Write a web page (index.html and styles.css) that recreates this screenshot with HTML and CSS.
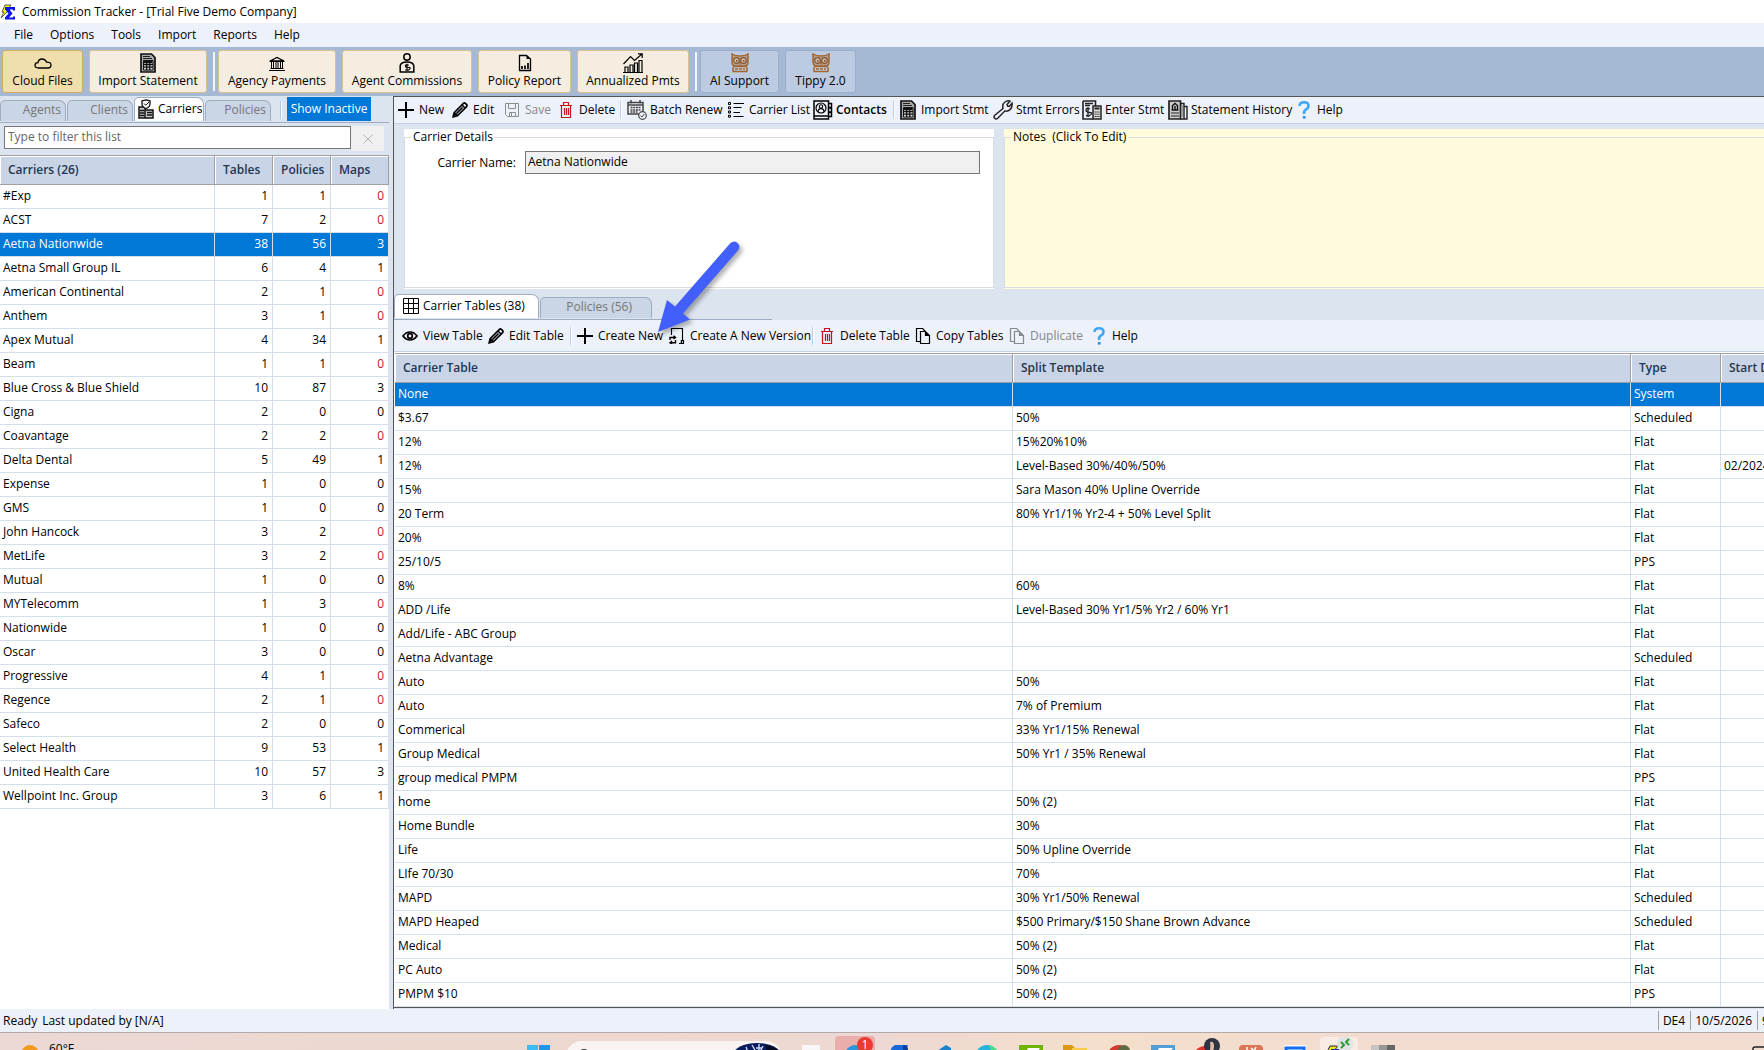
FILE: index.html
```html
<!DOCTYPE html>
<html lang="en">
<head>
<meta charset="utf-8">
<title>Commission Tracker - [Trial Five Demo Company]</title>
<link rel="stylesheet" href="styles.css">
</head>
<body>
<svg class="defs" aria-hidden="true">
  <symbol id="i-plus" viewBox="0 0 16 16"><path d="M8 0v16M0 8h16" stroke="#000" stroke-width="2"/></symbol>
  <symbol id="i-pencil" viewBox="0 0 16 16"><path d="M1.200 14.800l1-4.200L11.400 1.400q1-.8 2 0l1.200 1.200q.8 1 0 2L5.400 13.800zM10 3l3 3M2.400 10.800l2.800 2.800M4.500 11.500l6-6" fill="none" stroke="#000" stroke-width="1.700"/><path d="M1 15l.8-3 2.200 2.200z"/></symbol>
  <symbol id="i-save" viewBox="0 0 16 16"><path d="M1.500 1.500h13v13h-11l-2-2zM4.500 1.500v5h7v-5M5.500 14.500v-4h6v4M7.500 11v3" fill="none" stroke="#8a8d92"/></symbol>
  <symbol id="i-trash" viewBox="0 0 16 18"><path d="M2 4.500h12M5.500 4V1.500h5V4M3.500 5v11.500h9V5M6.500 7v7M8.500 7v7M10.500 7v7" fill="none" stroke="#c4171d" stroke-width="1.200"/></symbol>
  <symbol id="i-batch" viewBox="0 0 20 20"><path d="M1 2.500h15v11.500H1zM1 5h15M4 0v3.500M13 0v3.500" fill="none" stroke="#444" stroke-width="1.500"/><path d="M3.500 7.500h10M3.500 10h10M3.500 12h7" stroke="#444" stroke-width="1.500" stroke-dasharray="2 .7"/><circle cx="15.500" cy="15.500" r="3.800" fill="#edf1f9" stroke="#444" stroke-width="1.200"/><path d="M13.500 15.500l1.500 1.500 2.500-3" fill="none" stroke="#444"/></symbol>
  <symbol id="i-list" viewBox="0 0 16 16"><path d="M.5.5h2v2h-2zM.5 4.800h2v2h-2zM.5 9h2v2h-2zM.5 13.200h2v2h-2z" fill="none" stroke="#000"/><path d="M5.500 1.500H16M5.500 5.500h8M5.500 10.500H12M5.500 14.500h10" stroke="#000" stroke-width="1.200"/></symbol>
  <symbol id="i-contacts" viewBox="0 0 20 20"><path d="M1 1h14.500v18H1zM1 16h14M15.500 3.500H18.500v4h-3M15.500 8h3v4h-3M15.500 12.500h3v4h-3" fill="none" stroke="#000" stroke-width="1.500"/><circle cx="8" cy="8" r="5" fill="none" stroke="#000" stroke-width="1.200"/><circle cx="8" cy="6.500" r="1.700" fill="none" stroke="#000" stroke-width="1.100"/><path d="M5 12q0-3.400 3-3.400t3 3.400" fill="none" stroke="#000" stroke-width="1.100"/></symbol>
  <symbol id="i-calc" viewBox="0 0 16 20"><path d="M1 1h10.500L15 4.500V19H1z" fill="#aaa" stroke="#111" stroke-width="1.700"/><path d="M3 3.500h7M3 5.500h9" stroke="#222"/><path d="M3.500 7.500h9.500v9.500H3.500z" fill="#ddd" stroke="#111"/><path d="M4 9h8.500" stroke="#111" stroke-width="2"/><path d="M6.700 9v8M9.800 9v8M4 11.500h9M4 14.200h9" stroke="#111" stroke-width="1.300"/></symbol>
  <symbol id="i-wrench" viewBox="0 0 20 20"><path d="M1.500 15.500L10 8.500Q9 4 12 2t5-.8L14 4.500l.6 1.600 1.700.4L19 3.200q.7 4-2 6.400t-5 1.200L4.500 18.500q-1.500 1-2.800-.3t-.2-2.700z" fill="none" stroke="#222" stroke-width="1.500"/></symbol>
  <symbol id="i-enter" viewBox="0 0 20 20"><path d="M1 1h12.500v5M1 1v18h10" fill="none" stroke="#222" stroke-width="1.600"/><path d="M3 3.500h8M3 5.500h5M6 7v10M8 9Q4 7.500 4 10t4 2.500-1 3.500l-3-.5" fill="none" stroke="#222" stroke-width="1.300"/><path d="M11 6h8v13h-8z" fill="#ddd" stroke="#222" stroke-width="1.500"/><path d="M12.500 8.500h5" stroke="#222" stroke-width="2"/><path d="M12.500 12h5M12.500 14.200h5M12.500 16.500h5" stroke="#222" stroke-dasharray="1.300 .6"/></symbol>
  <symbol id="i-history" viewBox="0 0 20 20"><path d="M1 1h11.500v18H1z" fill="#ccc" stroke="#222" stroke-width="1.700"/><path d="M4 6l3-2.500L10 6M4.500 6v4h5V6M7 6v4M3.500 10h7" fill="none" stroke="#111" stroke-width="1.400"/><path d="M3 13h8M3 16h8" stroke="#222" stroke-width="1.200"/><path d="M12.500 3.500H16V19h-3.500M16 6.500h3V19h-3" fill="none" stroke="#222" stroke-width="1.400"/><path d="M14.200 5v12" stroke="#777"/></symbol>
  <symbol id="i-help" viewBox="0 0 16 18"><path d="M3.500 5Q3.500 1.300 8 1.300t4.500 3.700Q12.500 7 10 8.500T8.200 13" fill="none" stroke="#3ea6f8" stroke-width="2.600"/><path d="M6.800 15h2.800v2.600H6.800z" fill="#2f8fea"/></symbol>
  <symbol id="i-grid" viewBox="0 0 16 16"><path d="M.5.5h15v15H.5zM.5 5.500h15M.5 10.500h15M5.500.5v15M10.500.5v15" fill="none" stroke="#000"/></symbol>
  <symbol id="i-eye" viewBox="0 0 16 16"><path d="M1 8q3-4 7-4t7 4q-3 4-7 4T1 8z" fill="none" stroke="#000" stroke-width="1.700"/><circle cx="8" cy="8" r="2.300" fill="none" stroke="#000" stroke-width="1.700"/></symbol>
  <symbol id="i-version" viewBox="0 0 16 16"><path d="M2.500 7V.5h11V13M10 15.500h4.500V12" fill="none" stroke="#000" stroke-width="1.100"/><path d="M1 12V9.500h5M4.500 7.800L6.500 9.500 4.500 11M6.500 12v2.800h-5M3 13l-2 1.800L3 16M12.500 12v3" fill="none" stroke="#000" stroke-width="1.400"/></symbol>
  <symbol id="i-copy" viewBox="0 0 16 16"><path d="M5 13.500H1.500V.5h6L10 3" fill="none" stroke="currentColor" stroke-width="1.200"/><path d="M5.500 3.500h5L14.500 7.500v8h-9zM10.500 3.500v4h4" fill="none" stroke="currentColor" stroke-width="1.200"/><path d="M10.500 3.500l4 4h-4z" fill="currentColor"/></symbol>
  <symbol id="i-cloud" viewBox="0 0 18 20"><path d="M4.500 15Q1 15 1 12.300T4 9.600Q4.600 6 8 6t4.500 3.200q4.500-.2 4.500 2.900T13.500 15z" fill="none" stroke="#000" stroke-width="1.300"/></symbol>
  <symbol id="i-bank" viewBox="0 0 18 20"><path d="M2 8L9 4.500 16 8z" fill="none" stroke="#000" stroke-width="1.300"/><path d="M1.500 8.500h15M2.500 15.500h13M1 17.500h16" stroke="#000"/><path d="M3.500 9v6M5.500 9v6M8 9v6M10 9v6M12.500 9v6M14.500 9v6" stroke="#000"/></symbol>
  <symbol id="i-agent" viewBox="0 0 16 20"><circle cx="8" cy="4" r="3.200" fill="none" stroke="#000" stroke-width="1.500"/><path d="M1.200 19v-6.500Q2 9 8 9t6.800 3.500V19z" fill="none" stroke="#000" stroke-width="1.500"/><path d="M9.800 12.200Q6.400 11.200 6.400 12.900t3.200 1.600-.1 2.700l-3.200-.3M8 10.800v7.500" fill="none" stroke="#000" stroke-width="1.100"/></symbol>
  <symbol id="i-report" viewBox="0 0 14 20"><path d="M1.500 2.500h7L12.500 6v11.500h-11z" fill="none" stroke="#000" stroke-width="1.300"/><path d="M8.500 2.500V6h4z"/><path d="M4 16v-3M7 16v-3.500M10 16v-6" stroke="#000" stroke-width="1.700"/></symbol>
  <symbol id="i-chart" viewBox="0 0 20 20"><path d="M0 19.500h20M2 19v-5h3v5M7 19v-7h3v7M11.500 19V10h3v9M16 19V7.500h3V19" fill="none" stroke="#000" stroke-width="1.200"/><path d="M.5 11l7-7.500 4 4L19 1M15 .8h4.200V5" fill="none" stroke="#000" stroke-width="1.200"/></symbol>
  <symbol id="i-owl" viewBox="0 0 18 20"><path d="M1 1q3 2 8 2t8-2v8q0 3-2 4H3q-2-1-2-4z" fill="#a56c3c" fill-opacity=".45" stroke="#a3652f" stroke-width="1.500"/><circle cx="5.500" cy="7.500" r="2.800" fill="#c9bdb3" stroke="#8c5423" stroke-width="1.200"/><circle cx="12.500" cy="7.500" r="2.800" fill="#c9bdb3" stroke="#8c5423" stroke-width="1.200"/><path d="M5 7h1.500v1.500H5zM12 7h1.500v1.500H12zM8.200 9.500h1.600L9 12z" fill="#7a4518"/><path d="M2.500 13.500h13M1.500 18.500h15M2 14v4.500M16 14v4.500M4 16h3M8 16h3M12 16h2" stroke="#a3652f" stroke-width="1.500"/></symbol>
  <symbol id="i-carriers" viewBox="0 0 16 20"><path d="M1 8h6v11H1zM7 11h8v8H7z" fill="#ccc" stroke="#111" stroke-width="1.500"/><path d="M4 1.800L8 .8l4 1V5q0 3-4 4.500Q4 8 4 5z" fill="#fff" stroke="#111" stroke-width="1.300"/><path d="M6 4.500l1.800 1.800L11 3" fill="none" stroke="#111"/><path d="M2 11.500h4M2 14h4M2 16.500h4M9 13.500h5M9 16h5" stroke="#111" stroke-width="1.500"/></symbol>
</svg>

<header class="titlebar">
  <svg class="applogo" width="16" height="16" viewBox="0 0 16 16"><path d="M5 1h6L8 5h2L1 14l3-6H2z" fill="#ff0" stroke="#333" stroke-width=".8"/><path d="M5 3h10v3.500h-2V5.500H9.500l3 4-3.500 4h4V12.500h2V15.500H5v-2l3.500-4L5 5.500z" fill="#0a14f0"/></svg>
  <h1 class="apptitle">Commission Tracker - [Trial Five Demo Company]</h1>
</header>

<nav class="menubar">
  <button type="button">File</button><button type="button">Options</button><button type="button">Tools</button><button type="button">Import</button><button type="button">Reports</button><button type="button">Help</button>
</nav>

<div class="mainbar">
  <button type="button" class="big big-active"><svg width="18" height="20"><use href="#i-cloud"/></svg>Cloud Files</button>
  <button type="button" class="big big-long"><svg width="16" height="20"><use href="#i-calc"/></svg>Import Statement</button>
  <span class="bar-sep"></span>
  <button type="button" class="big big-long"><svg width="18" height="20"><use href="#i-bank"/></svg>Agency Payments</button>
  <button type="button" class="big big-xlong"><svg width="16" height="20"><use href="#i-agent"/></svg>Agent Commissions</button>
  <button type="button" class="big big-mid"><svg width="14" height="20"><use href="#i-report"/></svg>Policy Report</button>
  <button type="button" class="big big-wide"><svg width="20" height="20"><use href="#i-chart"/></svg>Annualized Pmts</button>
  <span class="bar-sep"></span>
  <button type="button" class="big big-blue"><svg width="18" height="20"><use href="#i-owl"/></svg>AI Support</button>
  <button type="button" class="big big-blue big-short"><svg width="18" height="20"><use href="#i-owl"/></svg>Tippy 2.0</button>
</div>

<main class="work">
  <aside class="side">
    <div class="tabs side-tabs">
      <button type="button" class="tab">Agents</button>
      <button type="button" class="tab">Clients</button>
      <button type="button" class="tab tab-on"><svg width="16" height="20"><use href="#i-carriers"/></svg>Carriers</button>
      <button type="button" class="tab">Policies</button>
      <span class="sep"></span>
      <button type="button" class="show-inactive">Show Inactive</button>
    </div>
    <div class="filter">
      <input type="text" aria-label="Filter" placeholder="Type to filter this list">
      <button type="button" aria-label="Clear filter"><svg width="10" height="10" viewBox="0 0 10 10"><path d="M.5.5l9 9M9.500.5l-9 9" stroke="#b4b4b4"/></svg></button>
    </div>
    <table class="grid carriers">
      <colgroup><col><col class="c-num"><col class="c-num"><col class="c-num"></colgroup>
      <thead><tr><th>Carriers (26)</th><th>Tables</th><th>Policies</th><th>Maps</th></tr></thead>
      <tbody>
        <tr><td>#Exp</td><td>1</td><td>1</td><td class="red">0</td></tr>
        <tr><td>ACST</td><td>7</td><td>2</td><td class="red">0</td></tr>
        <tr class="sel"><td>Aetna Nationwide</td><td>38</td><td>56</td><td>3</td></tr>
        <tr><td>Aetna Small Group IL</td><td>6</td><td>4</td><td>1</td></tr>
        <tr><td>American Continental</td><td>2</td><td>1</td><td class="red">0</td></tr>
        <tr><td>Anthem</td><td>3</td><td>1</td><td class="red">0</td></tr>
        <tr><td>Apex Mutual</td><td>4</td><td>34</td><td>1</td></tr>
        <tr><td>Beam</td><td>1</td><td>1</td><td class="red">0</td></tr>
        <tr><td>Blue Cross &amp; Blue Shield</td><td>10</td><td>87</td><td>3</td></tr>
        <tr><td>Cigna</td><td>2</td><td>0</td><td>0</td></tr>
        <tr><td>Coavantage</td><td>2</td><td>2</td><td class="red">0</td></tr>
        <tr><td>Delta Dental</td><td>5</td><td>49</td><td>1</td></tr>
        <tr><td>Expense</td><td>1</td><td>0</td><td>0</td></tr>
        <tr><td>GMS</td><td>1</td><td>0</td><td>0</td></tr>
        <tr><td>John Hancock</td><td>3</td><td>2</td><td class="red">0</td></tr>
        <tr><td>MetLife</td><td>3</td><td>2</td><td class="red">0</td></tr>
        <tr><td>Mutual</td><td>1</td><td>0</td><td>0</td></tr>
        <tr><td>MYTelecomm</td><td>1</td><td>3</td><td class="red">0</td></tr>
        <tr><td>Nationwide</td><td>1</td><td>0</td><td>0</td></tr>
        <tr><td>Oscar</td><td>3</td><td>0</td><td>0</td></tr>
        <tr><td>Progressive</td><td>4</td><td>1</td><td class="red">0</td></tr>
        <tr><td>Regence</td><td>2</td><td>1</td><td class="red">0</td></tr>
        <tr><td>Safeco</td><td>2</td><td>0</td><td>0</td></tr>
        <tr><td>Select Health</td><td>9</td><td>53</td><td>1</td></tr>
        <tr><td>United Health Care</td><td>10</td><td>57</td><td>3</td></tr>
        <tr><td>Wellpoint Inc. Group</td><td>3</td><td>6</td><td>1</td></tr>
      </tbody>
    </table>
  </aside>

  <section class="content">
    <div class="tools carrier-tools">
      <button type="button"><svg width="16" height="16"><use href="#i-plus"/></svg>New</button>
      <button type="button"><svg width="16" height="16"><use href="#i-pencil"/></svg>Edit</button>
      <button type="button" class="off" disabled><svg width="16" height="16"><use href="#i-save"/></svg>Save</button>
      <button type="button"><svg width="16" height="18"><use href="#i-trash"/></svg>Delete</button>
      <span class="sep"></span>
      <button type="button" class="wide"><svg width="20" height="20"><use href="#i-batch"/></svg>Batch Renew</button>
      <button type="button"><svg width="16" height="16"><use href="#i-list"/></svg>Carrier List</button>
      <button type="button" class="wide strong"><svg width="20" height="20"><use href="#i-contacts"/></svg>Contacts</button>
      <span class="sep"></span>
      <button type="button"><svg width="16" height="20"><use href="#i-calc"/></svg>Import Stmt</button>
      <button type="button" class="wide"><svg width="20" height="20"><use href="#i-wrench"/></svg>Stmt Errors</button>
      <button type="button" class="wide"><svg width="20" height="20"><use href="#i-enter"/></svg>Enter Stmt</button>
      <button type="button" class="wide"><svg width="20" height="20"><use href="#i-history"/></svg>Statement History</button>
      <button type="button"><svg width="16" height="18"><use href="#i-help"/></svg>Help</button>
    </div>

    <div class="panels">
      <div class="panel">
        <fieldset>
          <legend>Carrier Details</legend>
          <div class="field"><label for="cname">Carrier Name:</label><input id="cname" type="text" value="Aetna Nationwide" readonly></div>
        </fieldset>
      </div>
      <div class="panel notes">
        <fieldset><legend>Notes&nbsp; (Click To Edit)</legend></fieldset>
      </div>
    </div>

    <div class="tabs table-tabs">
      <button type="button" class="tab tab-on"><svg width="16" height="16"><use href="#i-grid"/></svg>Carrier Tables (38)</button>
      <button type="button" class="tab">Policies (56)</button>
    </div>

    <div class="tools table-tools">
      <button type="button"><svg width="16" height="16"><use href="#i-eye"/></svg>View Table</button>
      <button type="button"><svg width="16" height="16"><use href="#i-pencil"/></svg>Edit Table</button>
      <span class="sep"></span>
      <button type="button"><svg width="16" height="16"><use href="#i-plus"/></svg>Create New</button>
      <button type="button"><svg width="16" height="16"><use href="#i-version"/></svg>Create A New Version</button>
      <span class="sep"></span>
      <button type="button"><svg width="16" height="18"><use href="#i-trash"/></svg>Delete Table</button>
      <button type="button"><svg width="16" height="16"><use href="#i-copy"/></svg>Copy Tables</button>
      <button type="button" class="off" disabled><svg width="16" height="16"><use href="#i-copy"/></svg>Duplicate</button>
      <button type="button"><svg width="16" height="18"><use href="#i-help"/></svg>Help</button>
    </div>

    <div class="table-wrap">
      <table class="grid schedule">
        <colgroup><col><col><col class="c-type"><col class="c-date"></colgroup>
        <thead><tr><th>Carrier Table</th><th>Split Template</th><th>Type</th><th>Start Date</th></tr></thead>
        <tbody>
          <tr class="sel"><td>None</td><td></td><td>System</td><td></td></tr>
          <tr><td>$3.67</td><td>50%</td><td>Scheduled</td><td></td></tr>
          <tr><td>12%</td><td>15%20%10%</td><td>Flat</td><td></td></tr>
          <tr><td>12%</td><td>Level-Based 30%/40%/50%</td><td>Flat</td><td>02/2024</td></tr>
          <tr><td>15%</td><td>Sara Mason 40% Upline Override</td><td>Flat</td><td></td></tr>
          <tr><td>20 Term</td><td>80% Yr1/1% Yr2-4 + 50% Level Split</td><td>Flat</td><td></td></tr>
          <tr><td>20%</td><td></td><td>Flat</td><td></td></tr>
          <tr><td>25/10/5</td><td></td><td>PPS</td><td></td></tr>
          <tr><td>8%</td><td>60%</td><td>Flat</td><td></td></tr>
          <tr><td>ADD /Life</td><td>Level-Based 30% Yr1/5% Yr2 / 60% Yr1</td><td>Flat</td><td></td></tr>
          <tr><td>Add/Life - ABC Group</td><td></td><td>Flat</td><td></td></tr>
          <tr><td>Aetna Advantage</td><td></td><td>Scheduled</td><td></td></tr>
          <tr><td>Auto</td><td>50%</td><td>Flat</td><td></td></tr>
          <tr><td>Auto</td><td>7% of Premium</td><td>Flat</td><td></td></tr>
          <tr><td>Commerical</td><td>33% Yr1/15% Renewal</td><td>Flat</td><td></td></tr>
          <tr><td>Group Medical</td><td>50% Yr1 / 35% Renewal</td><td>Flat</td><td></td></tr>
          <tr><td>group medical PMPM</td><td></td><td>PPS</td><td></td></tr>
          <tr><td>home</td><td>50% (2)</td><td>Flat</td><td></td></tr>
          <tr><td>Home Bundle</td><td>30%</td><td>Flat</td><td></td></tr>
          <tr><td>Life</td><td>50% Upline Override</td><td>Flat</td><td></td></tr>
          <tr><td>LIfe 70/30</td><td>70%</td><td>Flat</td><td></td></tr>
          <tr><td>MAPD</td><td>30% Yr1/50% Renewal</td><td>Scheduled</td><td></td></tr>
          <tr><td>MAPD Heaped</td><td>$500 Primary/$150 Shane Brown Advance</td><td>Scheduled</td><td></td></tr>
          <tr><td>Medical</td><td>50% (2)</td><td>Flat</td><td></td></tr>
          <tr><td>PC Auto</td><td>50% (2)</td><td>Flat</td><td></td></tr>
          <tr><td>PMPM $10</td><td>50% (2)</td><td>PPS</td><td></td></tr>
        </tbody>
      </table>
    </div>

    <svg class="pointer" width="90" height="100" viewBox="0 0 90 100" aria-hidden="true"><path d="M4 92L13 60l8 6.500L76 3.500q4-3.500 7.500-.5t.5 7.500L29 73.500l7 6z" fill="#435ffb"/></svg>
  </section>
</main>

<footer class="status">
  <span>Ready</span><span class="grow">Last updated by [N/A]</span>
  <span class="cell">DE4</span><span class="cell">10/5/2026</span><span class="cell cell-time">9:41 AM</span>
</footer>

<div class="taskbar">
  <div class="weather"><svg width="18" height="18" viewBox="0 0 18 18"><circle cx="9" cy="9" r="9" fill="#f09a1c"/></svg><span>60°F</span></div>
  <div class="dock">
    <div class="slot low"><svg width="24" height="24" viewBox="0 0 24 24"><path d="M0 0h11v11H0z" fill="#3cbcf6"/><path d="M12 0h11v11H12z" fill="#2196e8"/></svg></div>
    <div class="search"><svg width="12" height="12" viewBox="0 0 12 12"><circle cx="6" cy="6" r="5" fill="none" stroke="#333" stroke-width="2"/></svg><svg width="50" height="24" viewBox="0 0 50 24"><ellipse cx="25" cy="12" rx="24" ry="12" fill="#0b1c5c"/><path d="M20 2l3 5M27 1v8M31 3l-2 4M14 4l2 5M24 5h6" stroke="#cfd6ee" stroke-width="1.400"/><path d="M33 2q12 2 16 8H36z" fill="#070b22"/></svg></div>
    <div class="slot low"><svg width="18" height="18" viewBox="0 0 18 18"><path d="M0 0h18v18H0z" fill="#f8f6f6"/></svg></div>
    <div class="slot alert"><svg width="20" height="20" viewBox="0 0 20 20"><circle cx="10" cy="10" r="10" fill="#2796dc"/></svg><span class="badge">1</span></div>
    <div class="slot low"><svg width="18" height="18" viewBox="0 0 18 18"><path d="M5 0h13l-3 9H0q0-7 5-9z" fill="#1767dd"/><path d="M13 0q5 0 5 5h-5z" fill="#0b3d9e"/></svg></div>
    <div class="slot low"><svg width="18" height="18" viewBox="0 0 18 18"><path d="M0 8L12 0l5 3v12z" fill="#1783d0"/></svg></div>
    <div class="slot low"><svg width="24" height="24" viewBox="0 0 24 24"><circle cx="12" cy="12" r="12" fill="#25b4dc"/><path d="M14 0q10 3 10 12h-6z" fill="#4ade80"/></svg></div>
    <div class="slot low"><svg width="24" height="24" viewBox="0 0 24 24"><path d="M0 0h24v24H0z" fill="#6fb404"/><path d="M9 3h12l-4 6H6z" fill="#fff"/></svg></div>
    <div class="slot low"><svg width="24" height="24" viewBox="0 0 24 24"><path d="M0 0h9l3 3h12v18H0z" fill="#dc9a12"/><path d="M9 3h15v3H9z" fill="#f8cc48"/></svg></div>
    <div class="slot low"><svg width="24" height="24" viewBox="0 0 24 24"><circle cx="12" cy="12" r="12" fill="#d33b30"/><circle cx="17" cy="6" r="6" fill="#5d6a42"/></svg></div>
    <div class="slot low"><svg width="24" height="24" viewBox="0 0 24 24"><path d="M0 0h24v24H0z" fill="#529fd8"/><path d="M8 3h14l-6 6H5z" fill="#fff"/></svg></div>
    <div class="slot"><svg width="28" height="28" viewBox="0 0 28 28"><circle cx="12" cy="20" r="12" fill="#dc352e"/><ellipse cx="19" cy="8" rx="8" ry="8" fill="#2f3540"/><path d="M17 4q4-1 4 4t-3 8h-2q2-7 1-12z" fill="#e3bba8"/></svg></div>
    <div class="slot low"><svg width="24" height="24" viewBox="0 0 24 24"><rect width="24" height="24" rx="4" fill="#d97757"/><path d="M8 2v5M12 3l3 3 2-4" fill="none" stroke="#fff" stroke-width="1.500"/></svg></div>
    <div class="slot low"><svg width="22" height="22" viewBox="0 0 22 22"><path d="M0 0h22v22H0z" fill="#f8f8fa"/><path d="M2 20V3h18v17" fill="none" stroke="#146ef0" stroke-width="3"/></svg></div>
    <div class="slot current"><svg width="32" height="28" viewBox="0 0 32 28"><path d="M7 9h8l-5 6H4z" fill="#eee21e" stroke="#222"/><path d="M8 12h9v3H8z" fill="#1528a8"/><ellipse cx="22" cy="7" rx="8" ry="8" fill="#dfe3e2"/><path d="M18 5l3 3-3 3M26 2l-3 3 3 3" fill="none" stroke="#2c9c32" stroke-width="2"/></svg></div>
    <div class="slot low"><svg width="24" height="24" viewBox="0 0 24 24"><path d="M0 0h8v24H0z" fill="#c6c4c4"/><path d="M8 0h8v24H8z" fill="#999"/><path d="M16 0h8v24h-8z" fill="#666"/></svg></div>
  </div>
  <svg class="tray" width="12" height="16" viewBox="0 0 12 16"><path d="M1 16V3q0-2 2-2h9" fill="none" stroke="#222" stroke-width="1.500"/></svg>
</div>
</body>
</html>
```
FILE: styles.css
```css
* { box-sizing: border-box; }

body {
  margin: 0;
  height: 100vh;
  display: grid;
  grid-template-rows: 23px 24px 49px minmax(0, 1fr) 23px 18px;
  overflow: hidden;
  background: #dce4ef;
  color: #000;
  font: 12px/16px "Open Sans", "Noto Sans", sans-serif;
}

.defs { position: absolute; width: 0; height: 0; }

svg { flex: none; display: block; }

button, input {
  font: inherit;
  color: inherit;
}

button {
  margin: 0;
  padding: 0;
  border: 0;
  background: none;
  white-space: nowrap;
}

.titlebar {
  display: flex;
  align-items: center;
  gap: 6px;
  background: #fff;
}

.apptitle { margin: 0; font: inherit; }

.menubar {
  display: flex;
  align-items: center;
  gap: 17px;
  padding-left: 14px;
  background: #edf1f9;
}

.mainbar {
  display: flex;
  align-items: flex-start;
  gap: 6px;
  padding: 3px 2px;
  background: #a5b8d4;
}

.big {
  display: flex;
  flex-direction: column;
  align-items: center;
  width: 81px;
  height: 43px;
  padding-top: 2px;
  border: 1px solid #dcbf90;
  border-radius: 3px;
  background: #f4ede0;
}

.big-active { background: #f0deac; border-color: #cfac62; }
.big-long { width: 118px; }
.big-xlong { width: 130px; }
.big-mid { width: 93px; }
.big-wide { width: 112px; }
.big-blue { width: 79px; background: #bccbe1; border-color: #9aaecd; }
.big-short { width: 71px; }

.bar-sep {
  width: 2px;
  height: 39px;
  margin: 2px -3px 0 0;
  background: #f2f5fa;
}

.work {
  display: grid;
  grid-template-columns: 389px minmax(0, 1fr);
  column-gap: 4px;
  min-height: 0;
}

.side {
  background: #fff;
  min-height: 0;
  overflow: hidden;
}

.tabs {
  display: flex;
  align-items: flex-end;
  gap: 1px;
  background: #dce4ef;
}

.tab {
  display: flex;
  align-items: center;
  justify-content: flex-end;
  gap: 4px;
  height: 21px;
  padding: 0 4px 2px;
  border: 1px solid #9fadc2;
  border-bottom: 0;
  border-radius: 5px 7px 0 0;
  background: #cad5e5;
  color: #777;
}

.tab-on {
  justify-content: flex-start;
  height: 24px;
  padding-bottom: 1px;
  background: #fff;
  color: #000;
}

.side-tabs {
  height: 27px;
  padding-bottom: 1px;
  border-bottom: 1px solid #9fadc2;
}

.side-tabs .tab { width: 66px; }
.side-tabs .tab-on { width: 70px; padding-left: 3px; }

.sep {
  width: 2px;
  height: 18px;
  border-left: 1px solid #c0cce0;
  background: #fff;
}

.side-tabs .sep { margin: 0 4px 2px 8px; border-color: #b8c2d2; }

.show-inactive {
  width: 84px;
  height: 24px;
  background: #0078d7;
  color: #fff;
}

.filter {
  display: flex;
  align-items: flex-start;
  height: 32px;
  padding: 3px 5px 0 4px;
  background: #dce4ef;
}

.filter input {
  flex: 1;
  min-width: 0;
  height: 23px;
  padding: 0 3px 2px;
  border: 1px solid #767676;
  border-radius: 0;
  background: #fff;
}

.filter input::placeholder { color: #666; opacity: 1; }

.filter button {
  display: grid;
  place-items: center;
  width: 33px;
  height: 25px;
  background: #f0f0f0;
}

.grid {
  width: 100%;
  table-layout: fixed;
  border-collapse: separate;
  border-spacing: 0;
}

.grid th {
  height: 30px;
  padding: 0 0 0 8px;
  border-top: 1px solid #a0a0a0;
  border-bottom: 1px solid #a0a0a0;
  border-right: 1px solid #a0a0a0;
  background: #c9d5e7;
  box-shadow: inset 1px 1px #fff;
  color: #24364f;
  font-weight: 600;
  text-align: left;
  white-space: nowrap;
  overflow: hidden;
}

.grid td {
  height: 24px;
  padding: 0 3px 1px;
  border-bottom: 1px solid #d5deeb;
  border-right: 1px solid #d5deeb;
  background: #fff;
  white-space: nowrap;
  overflow: hidden;
}

.grid .sel td { background: #0078d7; color: #fff; }

.c-num { width: 58px; }
.carriers td:nth-child(n+2) { text-align: right; padding-right: 4px; }
.carriers .red { color: #c4171d; }

.content {
  position: relative;
  display: flex;
  flex-direction: column;
  border-left: 1px solid #555;
  border-top: 1px solid #555;
  min-height: 0;
}

.tools {
  flex: none;
  display: grid;
  align-items: center;
  border-bottom: 1px solid #c6d2e3;
  background: #edf1f9;
}

.carrier-tools {
  grid-template-columns: 54px 52px 54px 62px 7px 101px 85px 80px 7px 93px 89px 86px 128px 60px;
  height: 27px;
  padding-left: 4px;
}

.table-tools {
  grid-template-columns: 86px 82px 7px 92px 143px 7px 96px 94px 82px 60px;
  height: 32px;
  padding-left: 8px;
}

.tools button {
  display: flex;
  align-items: center;
  gap: 5px;
}

.tools .wide { gap: 3px; }
.tools .strong { font-weight: 600; }
.tools .off { color: #85888c; }

.panels {
  flex: none;
  display: grid;
  grid-template-columns: 590px minmax(0, 1fr);
  column-gap: 10px;
  height: 165px;
  padding: 5px 0 0 10px;
}

.panel { background: #fff; }
.notes { background: #fffbdc; }

.panel fieldset {
  height: 159px;
  margin: 0;
  padding: 6px 13px;
  border: 1px solid #dadde0;
}

.panel legend { margin-left: -7px; padding: 0 2px; }
.notes fieldset { border-right: 0; }

.field { display: flex; align-items: center; }
.field label { width: 107px; padding-right: 9px; text-align: right; }

.field input {
  flex: 1;
  min-width: 0;
  height: 23px;
  padding: 0 2px 2px;
  border: 1px solid #767676;
  background: #f0f0f0;
}

.table-tabs {
  flex: none;
  height: 31px;
  width: 378px;
  padding-bottom: 1px;
  border-bottom: 1px solid #9fadc2;
}

.table-tabs .tab { width: 112px; padding-right: 19px; }
.table-tabs .tab-on { width: 145px; padding: 0 0 1px 8px; }

.table-wrap {
  flex: 1;
  min-height: 0;
  overflow: hidden;
  margin-bottom: 1px;
  padding: 1px 0 0 1px;
  border-bottom: 1px solid #555;
  background: #fff;
}

.c-type { width: 90px; }
.c-date { width: 43px; }
.schedule th:last-child, .schedule td:last-child { border-right: 0; }

.pointer {
  position: absolute;
  left: 260px;
  top: 143px;
  filter: drop-shadow(3px 3px 2px rgba(0, 0, 0, .3));
}

.status {
  display: flex;
  align-items: center;
  gap: 5px;
  padding-left: 3px;
  background: #edf1f9;
  overflow: hidden;
}

.grow { flex: 1; }

.cell {
  height: 19px;
  padding-left: 4px;
  border-left: 1px solid #a0a0a0;
  line-height: 19px;
  white-space: nowrap;
}

.cell-time { width: 7px; overflow: hidden; }

.taskbar {
  display: flex;
  border-top: 1px solid #b3a9aa;
  background: linear-gradient(90deg, #ecd8d4, #edd8cf 30%, #eed8d3 50%, #f3dfcb 62%, #f3ddd0 75%, #f2dcd0);
  overflow: hidden;
}

.weather {
  display: flex;
  gap: 10px;
  width: 517px;
  padding: 12px 0 0 21px;
}

.weather span { margin-top: -4px; }

.dock { display: flex; flex: 1; }

.slot {
  position: relative;
  display: flex;
  justify-content: center;
  width: 44px;
  padding-top: 5px;
}

.low { padding-top: 12px; }

.search {
  display: flex;
  justify-content: space-between;
  width: 216px;
  height: 32px;
  margin: 8px 7px 0 5px;
  padding: 2px 0 0 12px;
  border-radius: 16px;
  background: #f9f4f2;
}

.search svg:first-child { margin-top: 6px; }

.alert {
  width: 40px;
  margin: 3px 2px 0;
  padding-top: 9px;
  border-radius: 4px 4px 0 0;
  background: #e9aeac;
}

.badge {
  position: absolute;
  right: 2px;
  top: 1px;
  width: 16px;
  height: 16px;
  border-radius: 8px;
  background: #ec3a31;
  color: #fff;
  text-align: center;
}

.current {
  width: 38px;
  margin: 4px 3px 0;
  padding-top: 0;
  border-radius: 4px 4px 0 0;
  background: #f9ece5;
}

.tray { margin-top: 13px; }
```
